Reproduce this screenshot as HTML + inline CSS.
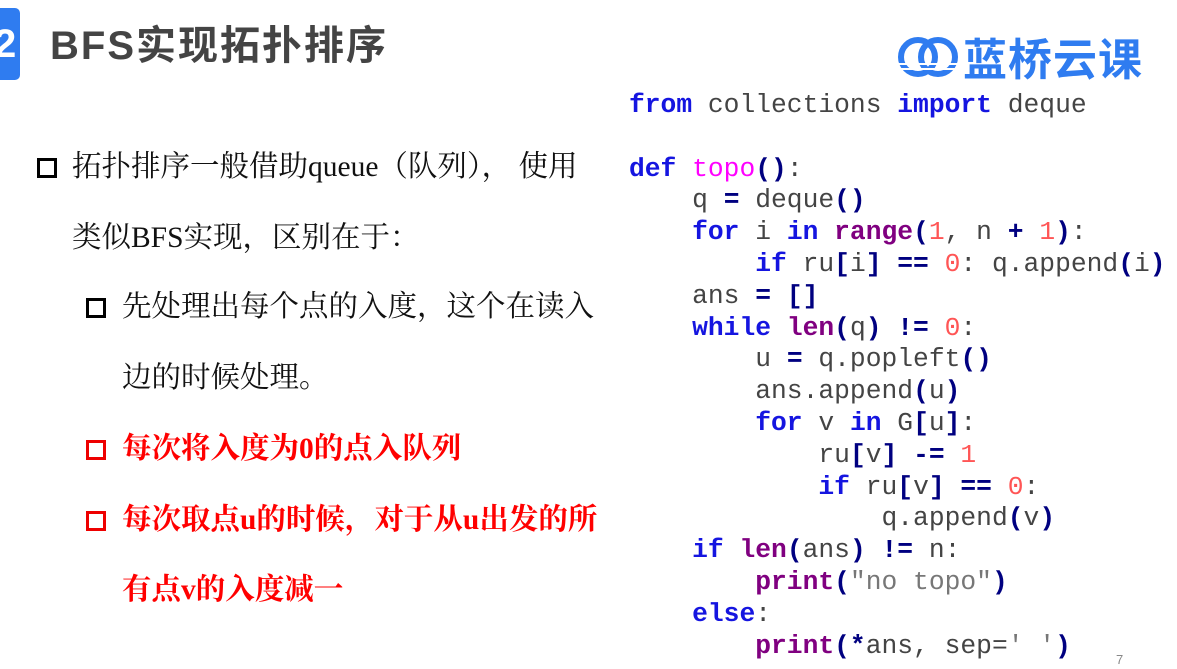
<!DOCTYPE html>
<html><head><meta charset="utf-8"><style>
body{margin:0;width:1177px;height:669px;background:#fff;position:relative;overflow:hidden;font-family:"Liberation Serif","Noto Serif CJK SC",serif}
.abs{position:absolute;white-space:nowrap}
.box{position:absolute;width:14px;height:14px;border:3px solid #000;box-sizing:content-box}
.red .box{border-color:#e00}
.t{font-size:29.5px;line-height:30px;color:#111}
.red{color:#f00;font-weight:bold}
pre{margin:0;position:absolute;left:629px;top:90px;font-family:"Liberation Mono",monospace;font-size:26.3px;line-height:31.8px;color:#444}
.k{color:#1515e0;font-weight:bold}.p{color:#000080;font-weight:bold}.f{color:#800080;font-weight:bold}.n{color:#f55}.m{color:#f0f}.s{color:#777}
</style></head><body>
<div class="abs" style="left:0;top:8px;width:20px;height:72px;background:#2f7cf0;border-radius:0 5px 5px 0;color:#fff;font:bold 40px/72px 'Liberation Sans',sans-serif;overflow:hidden;text-indent:-6px">2</div>
<div class="abs" style="left:50px;top:22px;font:bold 40px/48px 'Liberation Sans','Noto Sans CJK SC',sans-serif;color:#444;letter-spacing:2px">BFS实现拓扑排序</div>
<svg class="abs" style="left:897px;top:34px" width="64" height="46" viewBox="0 0 64 46"><circle cx="21" cy="23" r="17" fill="none" stroke="#2f7cf0" stroke-width="6"/><circle cx="41" cy="23" r="17" fill="none" stroke="#2f7cf0" stroke-width="6"/><rect x="0" y="29" width="64" height="2" fill="#fff"/><rect x="0" y="34" width="64" height="2" fill="#fff"/></svg>
<div class="abs" style="left:963px;top:31px;font:bold 44px/50px 'Noto Sans CJK SC',sans-serif;color:#2f7cf0;letter-spacing:1px">蓝桥云课</div>
<div class="t">
<div class="box" style="left:37px;top:158px"></div>
<div class="abs" style="left:72px;top:152px">拓扑排序一般借助queue（队列）， 使用</div>
<div class="abs" style="left:72px;top:223px">类似BFS实现，区别在于：</div>
<div class="box" style="left:86px;top:298px"></div>
<div class="abs" style="left:122px;top:292px">先处理出每个点的入度，这个在读入</div>
<div class="abs" style="left:122px;top:363px">边的时候处理。</div>
<div class="red"><div class="box" style="left:86px;top:440px"></div>
<div class="abs" style="left:122px;top:434px">每次将入度为0的点入队列</div>
<div class="box" style="left:86px;top:511px"></div>
<div class="abs" style="left:122px;top:505px">每次取点u的时候，对于从u出发的所</div>
<div class="abs" style="left:122px;top:575px">有点v的入度减一</div></div>
</div>
<pre><span class="k">from</span> collections <span class="k">import</span> deque

<span class="k">def</span> <span class="m">topo</span><span class="p">()</span>:
    q <span class="p">=</span> deque<span class="p">()</span>
    <span class="k">for</span> i <span class="k">in</span> <span class="f">range</span><span class="p">(</span><span class="n">1</span>, n <span class="p">+</span> <span class="n">1</span><span class="p">)</span>:
        <span class="k">if</span> ru<span class="p">[</span>i<span class="p">]</span> <span class="p">==</span> <span class="n">0</span>: q.append<span class="p">(</span>i<span class="p">)</span>
    ans <span class="p">=</span> <span class="p">[]</span>
    <span class="k">while</span> <span class="f">len</span><span class="p">(</span>q<span class="p">)</span> <span class="p">!=</span> <span class="n">0</span>:
        u <span class="p">=</span> q.popleft<span class="p">()</span>
        ans.append<span class="p">(</span>u<span class="p">)</span>
        <span class="k">for</span> v <span class="k">in</span> G<span class="p">[</span>u<span class="p">]</span>:
            ru<span class="p">[</span>v<span class="p">]</span> <span class="p">-=</span> <span class="n">1</span>
            <span class="k">if</span> ru<span class="p">[</span>v<span class="p">]</span> <span class="p">==</span> <span class="n">0</span>:
                q.append<span class="p">(</span>v<span class="p">)</span>
    <span class="k">if</span> <span class="f">len</span><span class="p">(</span>ans<span class="p">)</span> <span class="p">!=</span> n:
        <span class="f">print</span><span class="p">(</span><span class="s">"no topo"</span><span class="p">)</span>
    <span class="k">else</span>:
        <span class="f">print</span><span class="p">(*</span>ans, sep=<span class="s">' '</span><span class="p">)</span></pre>
<div class="abs" style="left:1116px;top:652px;font:13px 'Liberation Sans',sans-serif;color:#888">7</div>
</body></html>
